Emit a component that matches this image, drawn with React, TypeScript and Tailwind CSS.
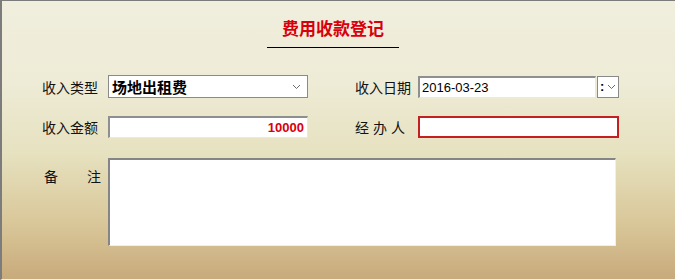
import React from 'react'

const CJK = { fontFamily: '"Noto Sans CJK SC", "Noto Sans", sans-serif' }

function Chevron() {
  return (
    <svg width="9" height="6" viewBox="0 0 9 6" className="shrink-0">
      <path d="M1 1 L4.5 4.5 L8 1" fill="none" stroke="#6b6b6b" strokeWidth="1" />
    </svg>
  )
}

function Label({ children }: { children: React.ReactNode }) {
  return (
    <span className="text-[14px] leading-none text-[#111] whitespace-pre" style={CJK}>
      {children}
    </span>
  )
}

export default function App() {
  return (
    <div
      className="w-[675px] h-[280px] border-t border-l-2 border-[#7c7c7c] border-b border-b-[#f4f0e0] overflow-hidden"
      style={{ background: 'linear-gradient(180deg, #f0eedd 0%, #eeebd6 30%, #e6e1bf 55%, #d9c799 80%, #c8aa7b 100%)' }}
    >
      {/* Title */}
      <div className="ml-[265px] w-[132px] pt-[17px]">
        <p className="text-center text-[17px] leading-[20px] font-bold text-[#d8000c]" style={CJK}>
          费用收款登记
        </p>
        <div className="mt-[9px] h-px bg-black" />
      </div>

      {/* Row 1 */}
      <div className="flex items-center mt-[27px] h-[23px]">
        <div className="w-[106px] pl-[40px]">
          <Label>收入类型</Label>
        </div>
        <div className="w-[200px] h-[23px] bg-white border border-[#8a8a8a] flex items-center pl-[3px] pr-[6px]">
          <span className="flex-1 text-[15px] font-bold text-black leading-none" style={CJK}>场地出租费</span>
          <Chevron />
        </div>
        <div className="w-[110px] pl-[47px]">
          <Label>收入日期</Label>
        </div>
        <div className="w-[178px] h-[22px] bg-white border-t-2 border-l-2 border-[#8f8f8f] border-b border-r border-b-[#e8e8e8] border-r-[#e8e8e8] flex items-center pl-[2px]">
          <span className="text-[13px] leading-none text-black" style={{ fontFamily: '"Liberation Sans", Arial, sans-serif' }}>2016-03-23</span>
        </div>
        <div className="w-[22px] h-[22px] ml-px bg-white border border-[#8a8a8a] flex items-center pl-[2px] gap-[3px]">
          <span className="text-[13px] leading-none text-black font-bold" style={{ fontFamily: '"Liberation Sans", Arial, sans-serif' }}>:</span>
          <Chevron />
        </div>
      </div>

      {/* Row 2 */}
      <div className="flex items-center mt-[18px] h-[22px]">
        <div className="w-[106px] pl-[40px]">
          <Label>收入金额</Label>
        </div>
        <div className="w-[200px] h-[22px] bg-white border-t-2 border-l-2 border-[#8f8f8f] border-b border-r border-b-[#e8e8e8] border-r-[#e8e8e8] flex items-center justify-end pr-[3px]">
          <span className="text-[13px] font-bold leading-none text-[#d8000c]" style={{ fontFamily: '"Liberation Sans", Arial, sans-serif' }}>10000</span>
        </div>
        <div className="w-[110px] pl-[47px]">
          <div className="w-[50px] flex justify-between">
            <Label>经</Label>
            <Label>办</Label>
            <Label>人</Label>
          </div>
        </div>
        <div className="w-[201px] h-[22px] bg-white border-2 border-[#c42020]" />
      </div>

      {/* Row 3 */}
      <div className="flex items-start mt-[20px]">
        <div className="w-[106px] pl-[42px] pt-[11px]">
          <div className="w-[57px] flex justify-between">
            <Label>备</Label>
            <Label>注</Label>
          </div>
        </div>
        <div className="w-[508px] h-[88px] bg-white border-t-2 border-l-2 border-[#858585] border-b border-r border-b-[#f2efe4] border-r-[#f2efe4]" />
      </div>
    </div>
  )
}
